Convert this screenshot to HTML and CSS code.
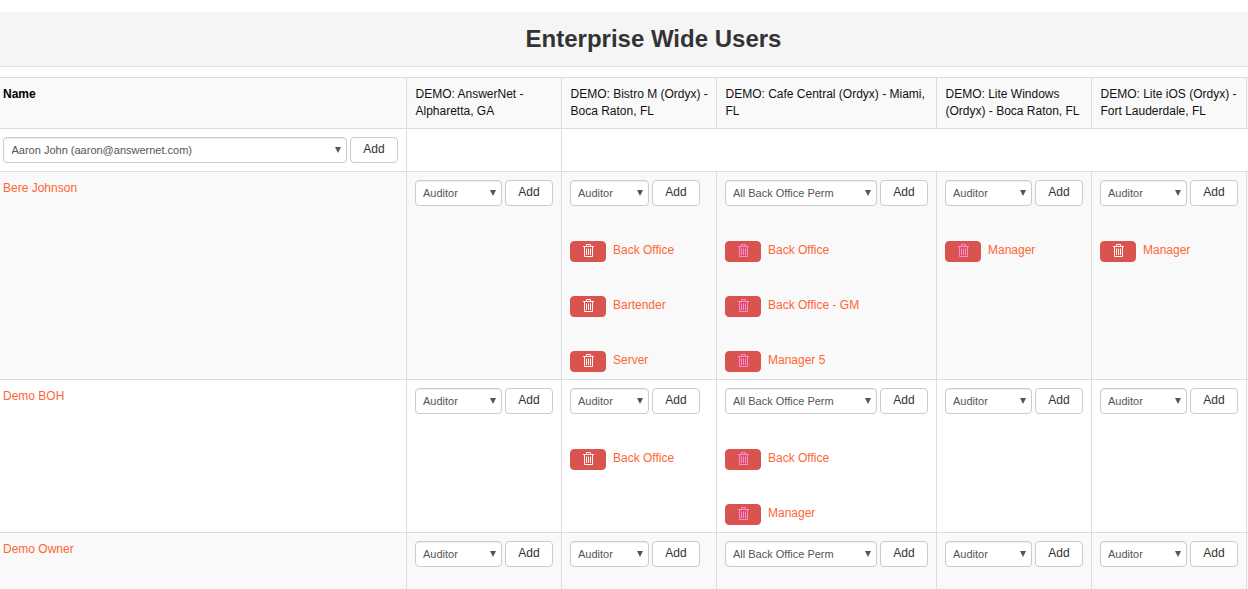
FILE: index.html
```html
<!DOCTYPE html>
<html lang="en">
<head>
<meta charset="utf-8">
<title>Enterprise Wide Users</title>
<link rel="stylesheet" href="styles.css">
</head>
<body>
<svg class="defs" width="0" height="0" aria-hidden="true">
  <symbol id="trash" viewBox="0 0 11 13">
    <path d="M0 2.5H11M3.5 2.5V0.5H7.5V2.5M1.5 2.5V12.5H9.5V2.5M3.5 4.5V11M5.5 4.5V11M7.5 4.5V11" fill="none" stroke="currentColor" stroke-width="1"/>
  </symbol>
</svg>
<main class="page">
  <h1 class="title">Enterprise Wide Users</h1>
  <table class="grid">
    <colgroup>
      <col class="c-name"><col class="c-std"><col class="c-std"><col class="c-wide"><col class="c-std"><col class="c-std"><col class="c-rest">
    </colgroup>
    <thead>
      <tr>
        <th class="name-cell name-head">Name</th>
        <th>DEMO: AnswerNet - Alpharetta, GA</th>
        <th>DEMO: Bistro M (Ordyx) - Boca Raton, FL</th>
        <th>DEMO: Cafe Central (Ordyx) - Miami, FL</th>
        <th>DEMO: Lite Windows (Ordyx) - Boca Raton, FL</th>
        <th>DEMO: Lite iOS (Ordyx) - Fort Lauderdale, FL</th>
        <th></th>
      </tr>
    </thead>
    <tbody>
      <tr class="plain">
        <td class="name-cell">
          <div class="controls">
            <span class="pick grow"><select><option>Aaron John (aaron@answernet.com)</option></select></span>
            <button class="add" type="button">Add</button>
          </div>
        </td>
        <td></td>
        <td colspan="5"></td>
      </tr>
      <tr class="striped">
        <td class="name-cell"><a class="link" href="#">Bere Johnson</a></td>
        <td><div class="controls"><span class="pick grow"><select><option>Auditor</option></select></span><button class="add" type="button">Add</button></div></td>
        <td>
          <div class="controls"><span class="pick short"><select><option>Auditor</option></select></span><button class="add" type="button">Add</button></div>
          <div class="role"><button class="del" type="button"><svg class="ico"><use href="#trash"/></svg></button><a class="link" href="#">Back Office</a></div>
          <div class="role"><button class="del" type="button"><svg class="ico"><use href="#trash"/></svg></button><a class="link" href="#">Bartender</a></div>
          <div class="role"><button class="del" type="button"><svg class="ico"><use href="#trash"/></svg></button><a class="link" href="#">Server</a></div>
        </td>
        <td>
          <div class="controls"><span class="pick grow"><select><option>All Back Office Perm</option></select></span><button class="add" type="button">Add</button></div>
          <div class="role"><button class="del pink" type="button"><svg class="ico"><use href="#trash"/></svg></button><a class="link" href="#">Back Office</a></div>
          <div class="role"><button class="del pink" type="button"><svg class="ico"><use href="#trash"/></svg></button><a class="link" href="#">Back Office - GM</a></div>
          <div class="role"><button class="del pink" type="button"><svg class="ico"><use href="#trash"/></svg></button><a class="link" href="#">Manager 5</a></div>
        </td>
        <td>
          <div class="controls"><span class="pick grow"><select><option>Auditor</option></select></span><button class="add" type="button">Add</button></div>
          <div class="role"><button class="del pink" type="button"><svg class="ico"><use href="#trash"/></svg></button><a class="link" href="#">Manager</a></div>
        </td>
        <td>
          <div class="controls"><span class="pick grow"><select><option>Auditor</option></select></span><button class="add" type="button">Add</button></div>
          <div class="role"><button class="del" type="button"><svg class="ico"><use href="#trash"/></svg></button><a class="link" href="#">Manager</a></div>
        </td>
        <td></td>
      </tr>
      <tr class="plain">
        <td class="name-cell"><a class="link" href="#">Demo BOH</a></td>
        <td><div class="controls"><span class="pick grow"><select><option>Auditor</option></select></span><button class="add" type="button">Add</button></div></td>
        <td>
          <div class="controls"><span class="pick short"><select><option>Auditor</option></select></span><button class="add" type="button">Add</button></div>
          <div class="role"><button class="del" type="button"><svg class="ico"><use href="#trash"/></svg></button><a class="link" href="#">Back Office</a></div>
        </td>
        <td>
          <div class="controls"><span class="pick grow"><select><option>All Back Office Perm</option></select></span><button class="add" type="button">Add</button></div>
          <div class="role"><button class="del pink" type="button"><svg class="ico"><use href="#trash"/></svg></button><a class="link" href="#">Back Office</a></div>
          <div class="role"><button class="del pink" type="button"><svg class="ico"><use href="#trash"/></svg></button><a class="link" href="#">Manager</a></div>
        </td>
        <td><div class="controls"><span class="pick grow"><select><option>Auditor</option></select></span><button class="add" type="button">Add</button></div></td>
        <td><div class="controls"><span class="pick grow"><select><option>Auditor</option></select></span><button class="add" type="button">Add</button></div></td>
        <td></td>
      </tr>
      <tr class="striped last">
        <td class="name-cell"><a class="link" href="#">Demo Owner</a></td>
        <td><div class="controls"><span class="pick grow"><select><option>Auditor</option></select></span><button class="add" type="button">Add</button></div></td>
        <td><div class="controls"><span class="pick short"><select><option>Auditor</option></select></span><button class="add" type="button">Add</button></div></td>
        <td><div class="controls"><span class="pick grow"><select><option>All Back Office Perm</option></select></span><button class="add" type="button">Add</button></div></td>
        <td><div class="controls"><span class="pick grow"><select><option>Auditor</option></select></span><button class="add" type="button">Add</button></div></td>
        <td><div class="controls"><span class="pick grow"><select><option>Auditor</option></select></span><button class="add" type="button">Add</button></div></td>
        <td></td>
      </tr>
    </tbody>
  </table>
</main>
</body>
</html>
```
FILE: styles.css
```css
html, body {
  margin: 0;
  height: 589px;
  overflow: hidden;
  background: #fff;
}
body {
  font-family: "Liberation Sans", Arial, sans-serif;
  font-size: 12px;
  line-height: 17px;
  color: #222;
}
.defs { display: block; height: 0; }
.page {
  width: 1307px;
  height: 577px;
  padding-top: 12px;
  overflow: hidden;
}
.title {
  margin: 0 0 10px;
  height: 54px;
  line-height: 54px;
  background: #f5f5f5;
  border-bottom: 1px solid #e2e2e2;
  text-align: center;
  font-size: 24px;
  font-weight: 700;
  color: #333;
}
.grid {
  width: 1307px;
  table-layout: fixed;
  border-collapse: collapse;
}
.c-name { width: 406px; }
.c-std { width: 155px; }
.c-wide { width: 220px; }
.c-rest { width: 61px; }
.grid th, .grid td {
  border: 1px solid #ddd;
  padding: 8px 8px 7px;
  vertical-align: top;
  text-align: left;
}
.grid th:first-child, .grid td:first-child { border-left: 0; }
.grid th {
  font-weight: 400;
  color: #111;
  background: #f9f9f9;
  height: 34px;
  padding: 8px 7px 8px 9px;
}
.grid th.name-head { font-weight: 700; color: #000; }
.grid .name-cell { padding-left: 3px; }
.striped td { background: #f9f9f9; }
.plain td { background: #fff; }
.last td { height: 100px; }
.link {
  color: #ff6633;
  text-decoration: none;
}
.controls {
  display: flex;
  gap: 3px;
  height: 26px;
}
.plain:first-child td { padding-bottom: 8px; }
.pick {
  position: relative;
  display: block;
}
.pick::after {
  content: "";
  position: absolute;
  right: 6px;
  top: 10px;
  border-left: 3.5px solid transparent;
  border-right: 3.5px solid transparent;
  border-top: 6px solid #555;
  pointer-events: none;
}
.grow { flex: 1 1 0; min-width: 0; }
.short { flex: 0 0 79px; }
.pick select {
  appearance: none;
  -webkit-appearance: none;
  display: block;
  box-sizing: border-box;
  width: 100%;
  height: 26px;
  padding: 0 14px 0 7.5px;
  border: 1px solid #ccc;
  border-radius: 4px;
  background: #fff;
  box-shadow: inset 0 1px 1px rgba(0, 0, 0, .075);
  font-family: "Liberation Sans", Arial, sans-serif;
  font-size: 11px;
  color: #555;
}
.add {
  flex: 0 0 48px;
  box-sizing: border-box;
  height: 26px;
  padding: 0 0 3px 1px;
  border: 1px solid #ccc;
  border-radius: 4px;
  background: #fff;
  font-family: "Liberation Sans", Arial, sans-serif;
  font-size: 12px;
  color: #333;
}
.role {
  display: flex;
  align-items: flex-start;
  gap: 7px;
  height: 21px;
  margin-top: 34px;
}
.controls + .role { margin-top: 35px; }
.role .link { line-height: 17px; padding: 1px 0 0 0.5px; }
.del {
  flex: 0 0 36px;
  display: flex;
  align-items: center;
  justify-content: center;
  box-sizing: border-box;
  width: 36px;
  height: 21px;
  padding: 0 0 2px 1px;
  border: 1px solid #d9534f;
  border-radius: 4px;
  background: #d9534f;
  color: #fff6f0;
}
.del.pink { color: #ff8adc; }
.ico { display: block; width: 11px; height: 13px; }
```
